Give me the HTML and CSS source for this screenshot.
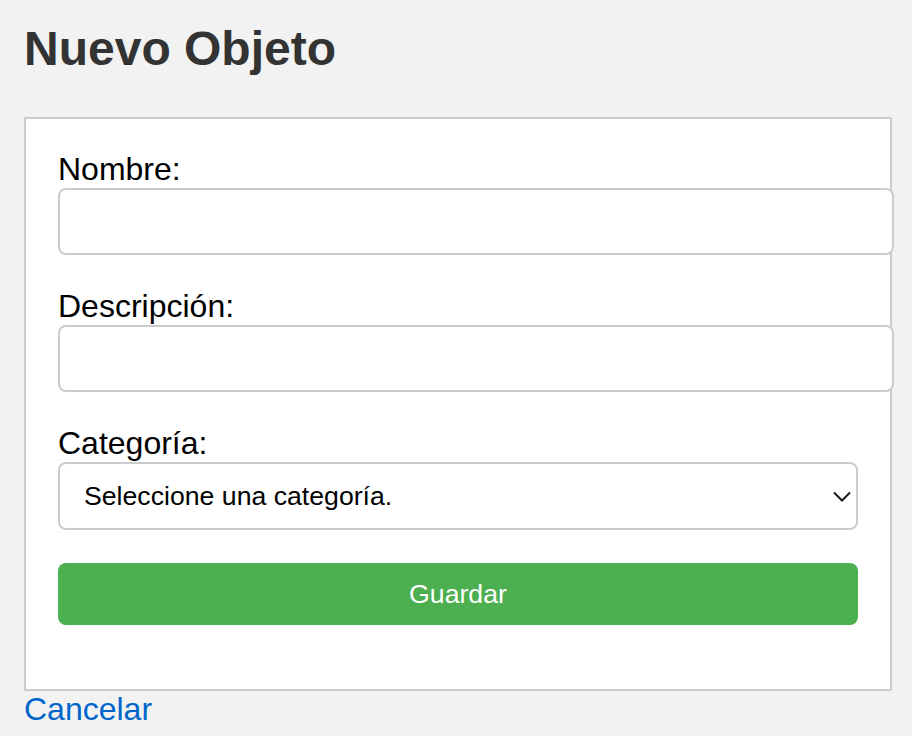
FILE: index.html
```html
<!DOCTYPE html>
<html lang="es">
<head>
<meta charset="utf-8">
<title>Nuevo Objeto</title>
<link rel="stylesheet" href="styles.css">
</head>
<body>
  <h1 class="title">Nuevo Objeto</h1>
  <form class="card">
    <label class="label" for="nombre">Nombre:</label>
    <input class="field" type="text" id="nombre">
    <label class="label" for="descripcion">Descripción:</label>
    <input class="field" type="text" id="descripcion">
    <label class="label" for="categoria">Categoría:</label>
    <div class="select-wrap">
      <select class="select" id="categoria">
        <option>Seleccione una categoría.</option>
      </select>
      <svg class="chevron" width="18" height="12" viewBox="0 0 18 12" aria-hidden="true">
        <path d="M1 1.5 L9 9.5 L17 1.5" fill="none" stroke="#1a1a1a" stroke-width="2"/>
      </svg>
    </div>
    <button class="btn" type="button">Guardar</button>
  </form>
  <a class="cancel" href="#">Cancelar</a>
</body>
</html>
```
FILE: styles.css
```css
html, body {
  margin: 0;
  background: #f2f2f2;
}
body {
  padding: 21px 20px 0 24px;
  font-family: "Liberation Sans", Arial, sans-serif;
  color: #000;
}
.title {
  margin: 0 0 41px;
  font-size: 48px;
  font-weight: bold;
  color: #333;
  line-height: normal;
}
.card {
  display: block;
  background: #fff;
  border: 2px solid #ccc;
  padding: 32px;
  margin: 0;
}
.label {
  display: block;
  font-size: 32px;
  line-height: normal;
}
.field {
  display: block;
  width: 100%;
  box-sizing: content-box;
  margin: 0 0 33px;
  padding: 16px;
  border: 2px solid #ccc;
  border-radius: 8px;
  font-family: "Liberation Sans", Arial, sans-serif;
  font-size: 26.67px;
  line-height: normal;
  background: #fff;
  outline: none;
}
.select-wrap {
  position: relative;
  margin: 0 0 33px;
}
.select {
  display: block;
  width: 100%;
  height: 68px;
  box-sizing: border-box;
  margin: 0;
  padding: 0 48px 0 24px;
  border: 2px solid #ccc;
  border-radius: 8px;
  background: #fff;
  font-family: "Liberation Sans", Arial, sans-serif;
  font-size: 26.67px;
  color: #000;
  -webkit-appearance: none;
  appearance: none;
}
.chevron {
  position: absolute;
  right: 7px;
  top: 29px;
  pointer-events: none;
}
.btn {
  display: block;
  width: 100%;
  height: 62px;
  margin: 0 0 32px;
  padding: 0;
  border: none;
  border-radius: 8px;
  background: #4caf50;
  color: #fff;
  font-family: "Liberation Sans", Arial, sans-serif;
  font-size: 26.67px;
}
.cancel {
  display: inline-block;
  font-size: 32px;
  line-height: normal;
  color: #0066cc;
  text-decoration: none;
}
```
